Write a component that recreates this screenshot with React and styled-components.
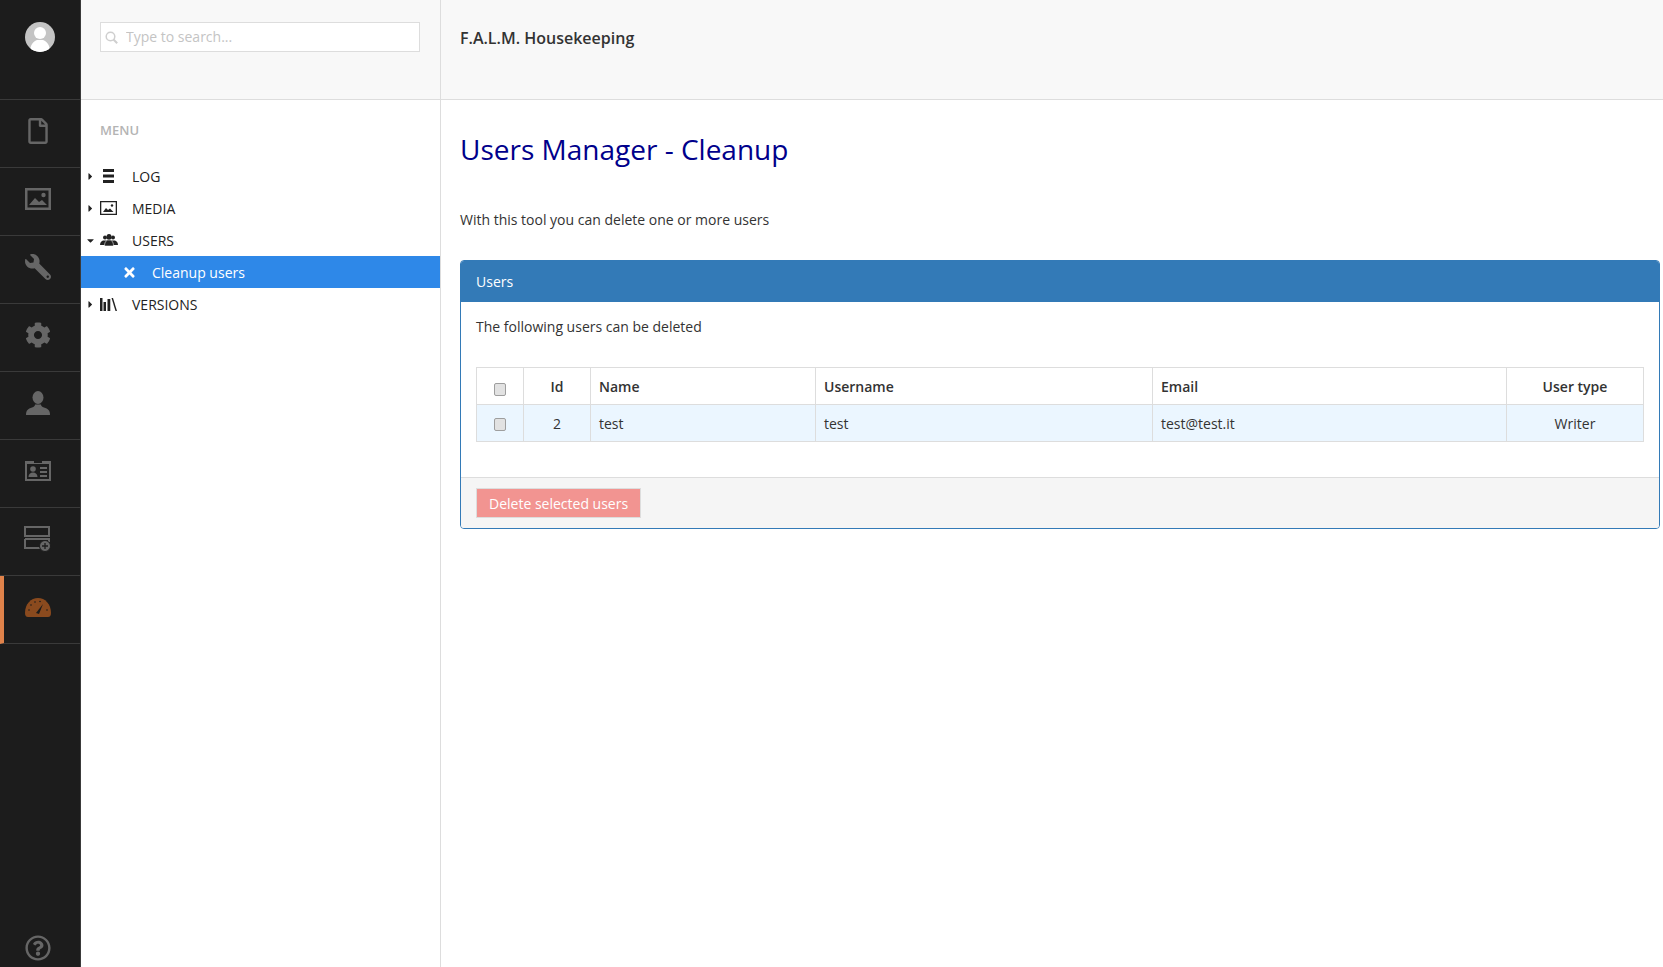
import React from "react";
import styled, { createGlobalStyle } from "styled-components";
import { FaRegFile, FaWrench, FaCog, FaRegQuestionCircle, FaTimes, FaCaretRight, FaCaretDown } from "react-icons/fa";

const GlobalStyle = createGlobalStyle`
  html, body {
    margin: 0;
    padding: 0;
    height: 100%;
    background: #fff;
    font-family: "Open Sans", "Liberation Sans", sans-serif;
    font-size: 14px;
    color: #333;
  }
  * { box-sizing: border-box; }
`;

const Page = styled.div`
  display: grid;
  grid-template-columns: 81px 360px 1fr;
  height: 100vh;
  overflow: hidden;
`;

// left icon rail
const Rail = styled.nav`
  display: flex;
  flex-direction: column;
  background: #1c1c1c;
  border-right: 1px solid #3a3a3a;
`;

const RailTop = styled.div`
  height: 100px;
  padding-top: 22px;
  border-bottom: 1px solid #3a3a3a;
  display: flex;
  justify-content: center;
`;

const Avatar = styled.div`
  width: 30px;
  height: 30px;
  border-radius: 50%;
  overflow: hidden;
  background: #c4c4c4;
`;

const RailItem = styled.a`
  height: 68px;
  flex: none;
  display: flex;
  align-items: center;
  justify-content: center;
  padding-bottom: ${(p) => (p.$active ? "4px" : "6px")};
  padding-right: ${(p) => (p.$active ? "9px" : "5px")};
  font-size: 26px;
  color: ${(p) => (p.$active ? "#8a4a1e" : "#666")};
  border-bottom: 1px solid #3a3a3a;
  border-left: ${(p) => (p.$active ? "4px solid #e0824a" : "0")};
`;

const FlippedIcon = styled.span`
  display: flex;
  transform: scaleX(-1);
`;

const RailHelp = styled.a`
  margin-top: auto;
  height: 38px;
  display: flex;
  align-items: center;
  justify-content: center;
  padding-right: 5px;
  font-size: 26px;
  color: #666;
`;

// middle column
const Side = styled.aside`
  display: flex;
  flex-direction: column;
  border-right: 1px solid #ddd;
`;

const SearchBar = styled.div`
  height: 100px;
  padding: 22px 20px 0 19px;
  background: #f8f8f8;
  border-bottom: 1px solid #ddd;
`;

const SearchBox = styled.label`
  height: 30px;
  display: flex;
  align-items: center;
  gap: 8px;
  padding-left: 4px;
  background: #fff;
  border: 1px solid #ddd;
  color: #c8c8c8;
`;

const SearchInput = styled.input`
  flex: 1;
  min-width: 0;
  border: 0;
  outline: 0;
  padding: 0 0 2px;
  background: none;
  font: 14px "Open Sans", "Liberation Sans", sans-serif;
  &::placeholder { color: #c4c4c4; opacity: 1; }
`;

const MenuTitle = styled.div`
  padding: 21px 19px 0;
  height: 60px;
  font-size: 13px;
  font-weight: 600;
  color: #b4b4b4;
`;

const Tree = styled.ul`
  list-style: none;
  margin: 0;
  padding: 0;
`;

const TreeRow = styled.li`
  height: 32px;
  display: flex;
  align-items: center;
  padding-left: ${(p) => (p.$child ? "41px" : "2px")};
  font-size: 14px;
  color: ${(p) => (p.$active ? "#fff" : "#222")};
  background: ${(p) => (p.$active ? "#2e88e8" : "none")};
`;

const Caret = styled.span`
  width: 14px;
  display: flex;
  justify-content: center;
  font-size: 11px;
  color: #222;
`;

const TreeIcon = styled.span`
  width: ${(p) => (p.$child ? "30px" : "35px")};
  display: flex;
  align-items: center;
  padding-left: ${(p) => (p.$child ? "0" : "3px")};
  font-size: 15px;
`;

// main area
const Main = styled.main`
  display: flex;
  flex-direction: column;
  min-width: 0;
`;

const TopBar = styled.header`
  height: 100px;
  padding: 27px 19px 0;
  background: #f8f8f8;
  border-bottom: 1px solid #ddd;
  font-size: 16px;
  font-weight: 580;
  line-height: 22px;
  color: #333;
`;

const Content = styled.section`
  padding: 28px 3px 0 19px;
`;

const Title = styled.h1`
  margin: 0;
  font-size: 28px;
  font-weight: 400;
  line-height: 42px;
  color: #00008b;
`;

const Intro = styled.p`
  margin: 40px 0 0;
  line-height: 20px;
`;

const Panel = styled.div`
  margin-top: 30px;
  border: 1px solid #337ab7;
  border-radius: 4px;
  overflow: hidden;
`;

const PanelHead = styled.div`
  height: 41px;
  padding: 0 15px;
  display: flex;
  align-items: center;
  background: #337ab7;
  color: #fff;
`;

const PanelBody = styled.div`
  padding: 15px 16px 35px 15px;
`;

const Lead = styled.p`
  margin: 0 0 30px;
  line-height: 20px;
`;

const Table = styled.table`
  width: 100%;
  table-layout: fixed;
  border-collapse: collapse;
`;

const Th = styled.th`
  height: 37px;
  padding: 0 8px;
  border: 1px solid #ddd;
  font-weight: 600;
  text-align: ${(p) => (p.$center ? "center" : "left")};
`;

const Td = styled.td`
  height: 37px;
  padding: 0 8px;
  border: 1px solid #ddd;
  background: #ebf6ff;
  text-align: ${(p) => (p.$center ? "center" : "left")};
`;

const Check = styled.input.attrs({ type: "checkbox" })`
  appearance: none;
  display: block;
  width: 12px;
  height: 13px;
  margin: ${(p) => (p.$head ? "6px" : "2px")} auto 0;
  background: #e2e2e2;
  border: 1px solid #9e9e9e;
  border-radius: 2px;
`;

const PanelFoot = styled.div`
  height: 51px;
  padding: 10px 15px 0;
  background: #f5f5f5;
  border-top: 1px solid #ddd;
`;

const DeleteButton = styled.button`
  height: 30px;
  padding: 0 12px;
  background: #f29491;
  border: 1px solid #ddd;
  color: #fff;
  font: 14px "Open Sans", "Liberation Sans", sans-serif;
`;

const AvatarIcon = () => (
  <svg viewBox="0 0 30 30" width="30" height="30">
    <circle cx="15" cy="11" r="6" fill="#fff" />
    <path d="M5 30c0-8 4-11 7-12h6c3 1 7 4 7 12z" fill="#fff" />
  </svg>
);

const SearchIcon = () => (
  <svg viewBox="0 0 13 13" width="13" height="13" fill="none" stroke="#cfcfcf">
    <circle cx="5.500" cy="5.500" r="4.300" strokeWidth="1.500" />
    <path d="M8.500 8.500l3.700 3.700" strokeWidth="2" />
  </svg>
);

const ImageIcon = () => (
  <svg viewBox="0 0 26 22" width="26" height="22" fill="currentColor">
    <path d="M0 0h26v22H0zM2.500 2.500v17h21v-17z" fillRule="evenodd" />
    <path d="M4 17l6-7 4 4 3-2 5 5z" />
    <circle cx="18.500" cy="7" r="2.200" />
  </svg>
);

const UserIcon = () => (
  <svg viewBox="0 0 24 24" width="24" height="24" fill="currentColor">
    <ellipse cx="12" cy="6.500" rx="5.500" ry="6.500" />
    <path d="M0 24c0-5 2-6 6-7.500 2-.8 3-1.500 3-3h6c0 1.500 1 2.200 3 3 4 1.500 6 2.500 6 7.500z" />
  </svg>
);

const CardIcon = () => (
  <svg viewBox="0 0 26 20" width="26" height="20" fill="currentColor">
    <path d="M0 0h9v2h8V0h9v20H0zM2 3v15h22V3z" fillRule="evenodd" />
    <circle cx="8" cy="8" r="2.800" />
    <path d="M3.500 16c0-3 2-4.500 4.500-4.500s4.500 1.500 4.500 4.500zM15 6h7v2h-7zM15 10h7v2h-7zM15 14h7v2h-7z" />
  </svg>
);

const ServerAddIcon = () => (
  <svg viewBox="0 0 27 26" width="27" height="26" fill="none" stroke="currentColor" strokeWidth="2">
    <path d="M1 1h24v9H1zM1 13h24v3M1 13v9h15" />
    <circle cx="21" cy="20" r="5.500" fill="currentColor" stroke="#1c1c1c" strokeWidth="1" />
    <path d="M18 20h6M21 17v6" stroke="#1c1c1c" strokeWidth="1.300" />
  </svg>
);

const GaugeIcon = () => (
  <svg viewBox="0 0 26 19" width="26" height="19">
    <path d="M0 15C0 6 6 0 13 0s13 6 13 15c0 2.500-1 4-3 4H3c-2 0-3-1.500-3-4z" fill="currentColor" />
    <path d="M11 15l7-9-4 10z" fill="#1c1c1c" />
    <g fill="#1c1c1c">
      <circle cx="4" cy="12" r=".8" /><circle cx="6" cy="7" r=".8" /><circle cx="10" cy="4" r=".8" />
      <circle cx="15" cy="3.500" r=".8" /><circle cx="22" cy="12" r=".8" />
    </g>
  </svg>
);

const LogIcon = () => (
  <svg viewBox="0 0 18 14" width="18" height="14" fill="#222">
    <path d="M3 0h11v3H3zM3 5.500h11v3H3zM3 11h11v3H3z" />
  </svg>
);

const MediaIcon = () => (
  <svg viewBox="0 0 17 14" width="17" height="14" fill="#222">
    <path d="M0 0h17v14H0zM1.300 1.300v11.400h14.400V1.300z" fillRule="evenodd" />
    <path d="M3 11l3-4 2 2 2-1.500 3.500 3.500z" />
    <circle cx="12" cy="4.500" r="1.200" />
  </svg>
);

const UsersIcon = () => (
  <svg viewBox="0 0 18 12" width="18" height="12" fill="#222">
    <circle cx="5" cy="3.500" r="2" />
    <circle cx="13" cy="3.500" r="2" />
    <path d="M0 11c0-3 2-4 3-4.500h4V11zM18 11c0-3-2-4-3-4.500h-4V11z" />
    <ellipse cx="9" cy="3" rx="2.500" ry="3" />
    <path d="M4.500 12c0-4 2-5.500 3-6h3c1 .5 3 2 3 6z" stroke="#fff" strokeWidth=".6" />
  </svg>
);

const BooksIcon = () => (
  <svg viewBox="0 0 17 13" width="17" height="13" fill="#222">
    <path d="M0 0h2.500v13H0zM3.500 4h2.500v9H3.500zM7.500 1h2.800v12H7.500z" />
    <path d="M11.500 0l1.500 0 4 13h-1.500z" />
  </svg>
);

const railItems = [
  { id: "file", icon: <FaRegFile /> },
  { id: "image", icon: <ImageIcon /> },
  { id: "wrench", icon: <FlippedIcon><FaWrench /></FlippedIcon> },
  { id: "cog", icon: <FaCog /> },
  { id: "user", icon: <UserIcon /> },
  { id: "card", icon: <CardIcon /> },
  { id: "server", icon: <ServerAddIcon /> },
  { id: "gauge", icon: <GaugeIcon />, active: true },
];

const menu = [
  { label: "LOG", icon: <LogIcon /> },
  { label: "MEDIA", icon: <MediaIcon /> },
  { label: "USERS", icon: <UsersIcon />, open: true },
  { label: "Cleanup users", icon: <FaTimes />, child: true, active: true },
  { label: "VERSIONS", icon: <BooksIcon /> },
];

function App() {
  return (
    <Page>
      <GlobalStyle />
      <Rail>
        <RailTop>
          <Avatar><AvatarIcon /></Avatar>
        </RailTop>
        {railItems.map((item) => (
          <RailItem key={item.id} $active={item.active}>{item.icon}</RailItem>
        ))}
        <RailHelp><FaRegQuestionCircle /></RailHelp>
      </Rail>

      <Side>
        <SearchBar>
          <SearchBox>
            <SearchIcon />
            <SearchInput placeholder="Type to search..." />
          </SearchBox>
        </SearchBar>
        <MenuTitle>MENU</MenuTitle>
        <Tree>
          {menu.map((row) => (
            <TreeRow key={row.label} $child={row.child} $active={row.active}>
              {!row.child && <Caret>{row.open ? <FaCaretDown /> : <FaCaretRight />}</Caret>}
              <TreeIcon $child={row.child}>{row.icon}</TreeIcon>
              {row.label}
            </TreeRow>
          ))}
        </Tree>
      </Side>

      <Main>
        <TopBar>F.A.L.M. Housekeeping</TopBar>
        <Content>
          <Title>Users Manager - Cleanup</Title>
          <Intro>With this tool you can delete one or more users</Intro>
          <Panel>
            <PanelHead>Users</PanelHead>
            <PanelBody>
              <Lead>The following users can be deleted</Lead>
              <Table>
                <colgroup>
                  <col width="47" />
                  <col width="67" />
                  <col width="225" />
                  <col width="337" />
                  <col width="354" />
                  <col width="137" />
                </colgroup>
                <thead>
                  <tr>
                    <Th $center><Check $head /></Th>
                    <Th $center>Id</Th>
                    <Th>Name</Th>
                    <Th>Username</Th>
                    <Th>Email</Th>
                    <Th $center>User type</Th>
                  </tr>
                </thead>
                <tbody>
                  <tr>
                    <Td $center><Check /></Td>
                    <Td $center>2</Td>
                    <Td>test</Td>
                    <Td>test</Td>
                    <Td>test@test.it</Td>
                    <Td $center>Writer</Td>
                  </tr>
                </tbody>
              </Table>
            </PanelBody>
            <PanelFoot>
              <DeleteButton>Delete selected users</DeleteButton>
            </PanelFoot>
          </Panel>
        </Content>
      </Main>
    </Page>
  );
}

export default App;
